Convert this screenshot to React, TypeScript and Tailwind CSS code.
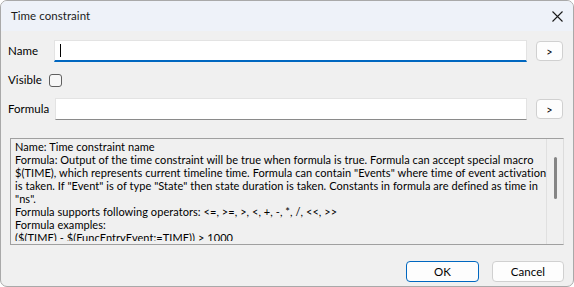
import React from 'react';

const helpLines = [
  'Name: Time constraint name',
  'Formula: Output of the time constraint will be true when formula is true. Formula can accept special macro',
  '$(TIME), which represents current timeline time. Formula can contain "Events" where time of event activation',
  'is taken. If "Event" is of type "State" then state duration is taken. Constants in formula are defined as time in',
  '"ns".',
  'Formula supports following operators: <=, >=, >, <, +, -, *, /, <<, >>',
  'Formula examples:',
  '($(TIME) - $(FuncEntryEvent:=TIME)) > 1000',
];

function PickButton() {
  return (
    <button className="w-[27px] h-[20px] rounded-[4px] border border-[#d0d0d0] bg-[#fdfdfd] text-[11px] leading-none text-black flex items-center justify-center">
      &gt;
    </button>
  );
}

export default function App() {
  return (
    <div
      className="w-[574px] h-[287px] flex flex-col overflow-hidden rounded-[7px] border border-[#a9a9a9] bg-[#f0f0f0] text-[11.5px] tracking-[0.05px] text-black"
      style={{ fontFamily: 'Lato, "Noto Sans", sans-serif' }}
    >
      {/* title bar */}
      <div className="h-[30px] shrink-0 flex items-center justify-between bg-[#eef2f9] pl-[10px] pr-[9px]">
        <span className="text-[#1a1a1a]">Time constraint</span>
        <svg width="11" height="11" viewBox="0 0 11 11" className="mr-[1px]">
          <path d="M0.5 0.5 L10.5 10.5 M10.5 0.5 L0.5 10.5" stroke="#1a1a1a" strokeWidth="1.1" />
        </svg>
      </div>

      <div className="flex-1 flex flex-col pl-[7px] pr-[9px]">
        {/* Name */}
        <div className="mt-[9px] h-[22px] flex items-center">
          <span className="w-[46px]">Name</span>
          <div className="relative w-[473px] h-[22px] bg-white border border-[#e3e3e3] border-b-2 border-b-[#0067c0]">
            <div className="absolute left-[5px] top-[3px] w-px h-[13px] bg-black" />
          </div>
          <div className="ml-[9px]">
            <PickButton />
          </div>
        </div>

        {/* Visible */}
        <div className="mt-[11px] h-[14px] flex items-center">
          <span className="w-[41px]">Visible</span>
          <div className="w-[13px] h-[13px] rounded-[3px] border border-[#5f5f5f] bg-[#f7f7f7]" />
        </div>

        {/* Formula */}
        <div className="mt-[11px] h-[22px] flex items-center">
          <span className="w-[47px]">Formula</span>
          <div className="w-[472px] h-[22px] bg-white border border-[#e3e3e3] border-b-[#8a8a8a]" />
          <div className="ml-[9px]">
            <PickButton />
          </div>
        </div>

        {/* help text */}
        <div className="mt-[18px] ml-[2px] h-[107px] flex border border-[#a0a0a0] border-r-[#dcdcdc] border-b-[#a0a0a0] bg-[#f0f0f0] overflow-hidden">
          <div className="flex-1 h-[102px] pl-[4px] pt-[1px] text-[11px] tracking-[0.06px] leading-[13px] whitespace-nowrap overflow-hidden">
            {helpLines.map((line, i) => (
              <div key={i}>{line}</div>
            ))}
          </div>
          <div className="w-[17px] border-l border-[#e0e0e0] flex justify-center">
            <div className="mt-[18px] ml-[1px] w-[3px] h-[42px] rounded-full bg-[#858585]" />
          </div>
        </div>

        {/* footer buttons */}
        <div className="mt-[16px] flex justify-end gap-[13px]">
          <button className="w-[73px] h-[21px] rounded-[4px] border border-[#0067c0] bg-[#fdfdfd] leading-none">
            OK
          </button>
          <button className="w-[72px] h-[21px] rounded-[4px] border border-[#d0d0d0] bg-[#fdfdfd] leading-none">
            Cancel
          </button>
        </div>
      </div>
    </div>
  );
}
